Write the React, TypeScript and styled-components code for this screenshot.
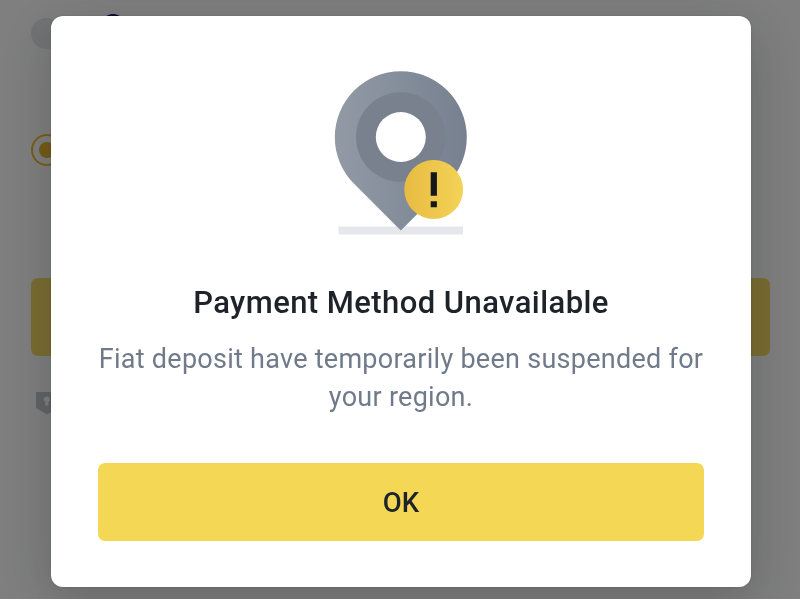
import React from "react";
import styled, { createGlobalStyle } from "styled-components";

const GlobalStyle = createGlobalStyle`
  * { box-sizing: border-box; }
  html, body { margin: 0; height: 100%; overflow: hidden; }
  body { background: #fff; font-family: Roboto, "Liberation Sans", sans-serif; }
`;

const Page = styled.main`
  display: flex;
  flex-direction: column;
  align-items: flex-start;
  height: 599px;
  padding: 13px 30px 0 31px;
`;

const Steps = styled.header`
  display: flex;
  align-items: flex-start;
  gap: 39px;
  height: 40px;
`;

const StepDot = styled.span<{ $color: string; $size: number; $top: number }>`
  width: ${(p) => p.$size}px;
  height: ${(p) => p.$size}px;
  margin-top: ${(p) => p.$top}px;
  border-radius: 50%;
  background: ${(p) => p.$color};
`;

const Radio = styled.span`
  display: grid;
  place-items: center;
  width: 32px;
  height: 32px;
  margin-top: 81px;
  border: 2px solid #f0bd22;
  border-radius: 50%;

  &::after {
    content: "";
    width: 16px;
    height: 16px;
    border-radius: 50%;
    background: #e8b62a;
  }
`;

const PageButton = styled.div`
  align-self: stretch;
  height: 78px;
  margin-top: 112px;
  border-radius: 7px;
  background: #f5d962;
`;

const Shield = styled.svg`
  display: block;
  margin: 36px 0 0 5px;
`;

const Overlay = styled.div`
  position: fixed;
  inset: 0;
  padding: 16.3px 49px 11.7px 51px;
  background: rgba(0, 0, 0, 0.5);
`;

const Dialog = styled.section`
  display: flex;
  flex-direction: column;
  align-items: center;
  height: 571px;
  padding: 53.7px 47px 46.3px;
  border-radius: 12px;
  background: #fff;
  box-shadow: 0 14px 52px rgba(24, 26, 32, 0.25), 0 0 3px rgba(24, 26, 32, 0.15);
`;

const Illustration = styled.svg`
  display: block;
  flex: none;
`;

const Title = styled.h1`
  margin: 47px 0 0;
  font-size: 31px;
  line-height: 40px;
  font-weight: 500;
  letter-spacing: 0.43px;
  color: #1e2329;
  white-space: nowrap;
`;

const Message = styled.p`
  margin: 17px 0 0;
  font-size: 27px;
  line-height: 38.5px;
  letter-spacing: 0.27px;
  color: #707a8a;
  text-align: center;
  white-space: nowrap;
`;

const ConfirmButton = styled.button`
  flex: none;
  width: 606px;
  height: 78px;
  margin-top: auto;
  padding: 1px 0 0;
  border: 0;
  border-radius: 7px;
  background: #f5d756;
  color: #1e2329;
  font: 500 27.5px/77px Roboto, "Liberation Sans", sans-serif;
`;

function PinIllustration() {
  return (
    <Illustration width="134" height="166" viewBox="334 70 134 166" aria-hidden="true">
      <defs>
        <linearGradient id="pin" x1="335" x2="467" y1="0" y2="0" gradientUnits="userSpaceOnUse">
          <stop stopColor="#929aa5" />
          <stop offset="1" stopColor="#76808f" />
        </linearGradient>
        <linearGradient id="badge" x1="404.5" x2="463" y1="0" y2="0" gradientUnits="userSpaceOnUse">
          <stop stopColor="#e8bb41" />
          <stop offset="1" stopColor="#f3d357" />
        </linearGradient>
      </defs>
      <path d="M338.5 226.5H463v8H338.5z" fill="#e6e7ec" />
      <path d="M400.8 230.5L354.1 183.8A66 66 0 1 1 447.5 183.8Z" fill="url(#pin)" />
      <circle cx="400.8" cy="137" r="44.8" fill="#7a818e" />
      <circle cx="400.8" cy="137" r="25" fill="#fff" />
      <circle cx="433.7" cy="189.5" r="29.4" fill="url(#badge)" />
      <path d="M430.7 172.2h6.2v23.6h-6.2zM430.7 201.2h6.2v6h-6.2z" fill="#14181d" />
    </Illustration>
  );
}

export default function App() {
  return (
    <>
      <GlobalStyle />
      <Page>
        <Steps>
          <StepDot $size={31} $top={5} $color="#e6e8ea" />
          <StepDot $size={24} $top={1} $color="#12126e" />
        </Steps>
        <Radio />
        <PageButton />
        <Shield width="22" height="23" viewBox="0 0 22 23">
          <path d="M0 0h22v16l-11 6.5L0 16z" fill="#c2c8ce" />
          <path d="M10.8 4.5a3 3 0 0 0-1.6 5.6v3.5h3.2v-3.5a3 3 0 0 0-1.6-5.6z" fill="#fff" />
        </Shield>
      </Page>
      <Overlay>
        <Dialog role="dialog" aria-modal="true" aria-labelledby="dialog-title">
          <PinIllustration />
          <Title id="dialog-title">Payment Method Unavailable</Title>
          <Message>
            Fiat deposit have temporarily been suspended for
            <br />
            your region.
          </Message>
          <ConfirmButton type="button">OK</ConfirmButton>
        </Dialog>
      </Overlay>
    </>
  );
}
